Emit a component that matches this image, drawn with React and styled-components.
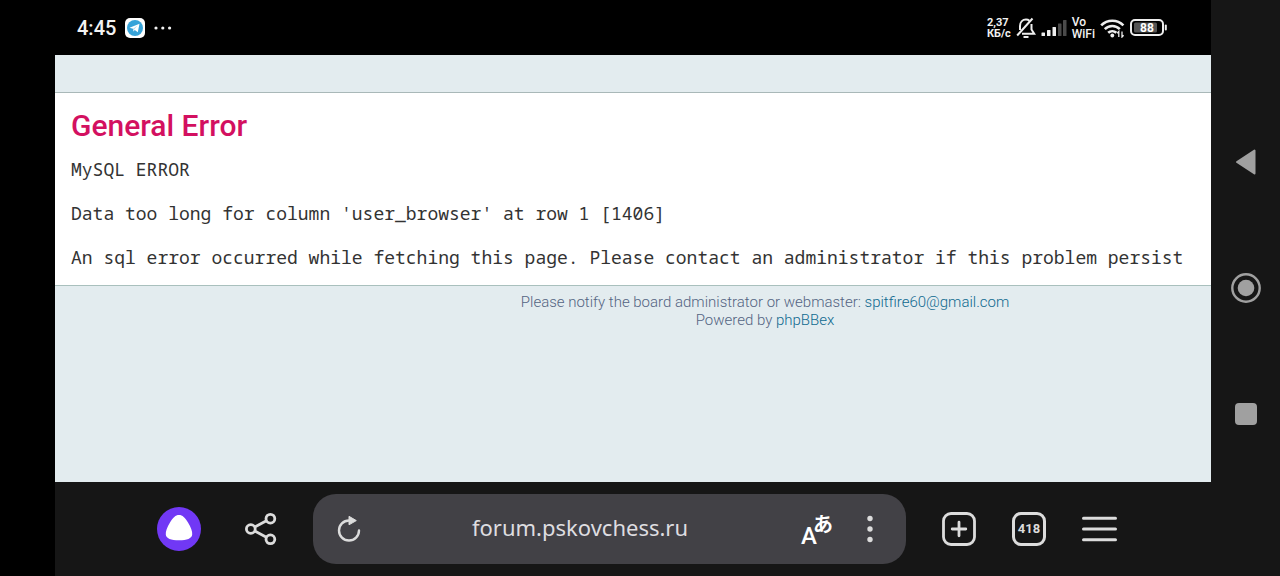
import React from 'react';
import styled, { createGlobalStyle } from 'styled-components';

const GlobalStyle = createGlobalStyle`
  *, *::before, *::after { box-sizing: border-box; }
  body {
    margin: 0;
    background: #000;
    font-family: Roboto, "Liberation Sans", sans-serif;
  }
  svg { display: block; flex: none; }
`;

const Screen = styled.div`
  display: grid;
  grid-template-columns: 55px minmax(0, 1fr) 69px;
  grid-template-rows: 55px 1fr 94px;
  min-height: 100vh;
  background: #000;
`;

const StatusBar = styled.header`
  grid-column: 1 / 3;
  display: flex;
  align-items: center;
  justify-content: space-between;
  padding: 0 44px 0 77px;
  color: #f2f2f2;
`;

const StatusGroup = styled.div`
  display: flex;
  align-items: center;
  gap: ${(p) => p.$gap}px;
`;

const Clock = styled.time`
  font-size: 20px;
  line-height: 24px;
  font-weight: 500;
`;

const TinyLabel = styled.span`
  font-size: ${(p) => p.$size}px;
  line-height: ${(p) => p.$size}px;
  font-weight: ${(p) => p.$weight};
  white-space: nowrap;
`;

const WebView = styled.main`
  grid-column: 2;
  overflow: hidden;
  background: #e3ecef;
`;

/* The forum page is wider than the viewport and runs off its right edge. */
const ForumPage = styled.div`
  width: calc(100% + 264px);
  padding-top: 37px;
`;

const ErrorPanel = styled.section`
  padding: 15px 16px 17px;
  border-top: 1px solid #a9b8b8;
  border-bottom: 1px solid #a9c0bd;
  background: #fff;
`;

const ErrorTitle = styled.h1`
  margin: 0 0 14px;
  font-size: 30px;
  line-height: 36px;
  font-weight: 500;
  color: #d31060;
`;

const ErrorLine = styled.p`
  margin: 0;
  font-family: "Noto Sans Mono", "DejaVu Sans Mono", monospace;
  font-size: 18px;
  line-height: 22px;
  color: #333;
  white-space: nowrap;

  & + & { margin-top: 22px; }
`;

const ForumFooter = styled.footer`
  padding-top: 7px;
  font-size: 15px;
  line-height: 18px;
  font-weight: 300;
  text-align: center;
  color: #536482;
`;

const FooterLink = styled.a`
  color: #0f6a8f;
  text-decoration: none;
`;

const SideNav = styled.nav`
  grid-column: 3;
  grid-row: 1 / 4;
  display: flex;
  flex-direction: column;
  align-items: center;
  justify-content: center;
  gap: 86px;
  background: #161616;
`;

const Toolbar = styled.div`
  grid-column: 2;
  display: flex;
  align-items: center;
  gap: 36px;
  padding: 0 94px 0 102px;
  background: #161616;
`;

const ToolGroup = styled.div`
  display: flex;
  align-items: center;
  gap: ${(p) => p.$gap}px;
`;

const IconButton = styled.button`
  display: flex;
  align-items: center;
  justify-content: center;
  flex: none;
  width: ${(p) => p.$width}px;
  height: 40px;
  padding: 0;
  border: 0;
  background: none;
  color: #dcdcdc;
`;

const AddressBar = styled.div`
  display: flex;
  flex: 1;
  align-items: center;
  min-width: 0;
  height: 70px;
  padding: 0 24px;
  border-radius: 23px;
  background: #424146;
`;

const AddressInput = styled.input`
  flex: 1;
  min-width: 0;
  padding: 0 0 4px;
  border: 0;
  outline: 0;
  background: none;
  font-family: "Noto Sans", sans-serif;
  font-size: 22px;
  line-height: 30px;
  text-align: center;
  color: #dedde0;
`;

const MoreButton = styled(IconButton)`
  margin-left: 23px;
`;

const TabsButton = styled.button`
  flex: none;
  width: 34px;
  height: 34px;
  padding: 0;
  border: 3px solid #dcdcdc;
  border-radius: 9px;
  background: none;
  font-family: Roboto, sans-serif;
  font-size: 13px;
  line-height: 28px;
  font-weight: 700;
  text-align: center;
  color: #dcdcdc;
`;

const TelegramIcon = () => (
  <svg width="20" height="20" viewBox="0 0 20 20">
    <rect width="20" height="20" rx="5" fill="#fff" />
    <circle cx="10" cy="10" r="8" fill="#36a3d9" />
    <path d="M4.5 9.8 14.5 5.8 12.8 14.2 9.8 12 8.4 13.4 8 10.8Z" fill="#fff" />
    <path d="m8 10.8 4.6-3.2-3.4 3.9-.8 1.9Z" fill="#b5dcf0" />
  </svg>
);

const DotsIcon = () => (
  <svg width="18" height="4" viewBox="0 0 18 4" fill="#f2f2f2">
    <circle cx="2" cy="2" r="1.6" />
    <circle cx="8.8" cy="2" r="1.6" />
    <circle cx="15.6" cy="2" r="1.6" />
  </svg>
);

const MutedBellIcon = () => (
  <svg width="20" height="22" viewBox="0 0 20 22" fill="none" stroke="#eee" strokeWidth="2">
    <path d="M4 13V9C4 5.200 6.500 2.500 10 2.500c1.300 0 2.500.4 3.500 1.200M15.500 7V12.500L18.200 16.800H6" />
    <path d="M1.200 18.500 16.500 1.500" />
    <path d="M7.500 20h5" />
  </svg>
);

const SignalIcon = () => (
  <svg width="26" height="18" viewBox="0 0 26 18">
    <rect x="0.500" y="13.500" width="3.500" height="3.500" rx="0.500" fill="#eee" />
    <rect x="6" y="11" width="3.500" height="6" rx="0.500" fill="#eee" />
    <rect x="11.500" y="8" width="3.500" height="9" rx="0.500" fill="#eee" />
    <rect x="17" y="4.500" width="3.500" height="12.500" rx="0.500" fill="#4a4a4a" />
    <rect x="22" y="1" width="3.500" height="16" rx="0.500" fill="#4a4a4a" />
  </svg>
);

const WifiIcon = () => (
  <svg width="25" height="20" viewBox="0 0 25 20" fill="none" stroke="#eee" strokeWidth="2.600">
    <path d="M1.200 7.400a15.500 15.500 0 0 1 22.200 0" />
    <path d="M4.800 11.200a10.500 10.500 0 0 1 15 0" />
    <path d="M8.200 14.800a6 6 0 0 1 8.200 0" />
    <circle cx="12.300" cy="17.500" r="1.900" fill="#eee" stroke="none" />
    <path d="M18.800 19v-5.500l-1.600 1.800M22 13.500V19l1.600-1.800" strokeWidth="1.300" />
  </svg>
);

const BatteryIcon = () => (
  <svg width="37" height="17" viewBox="0 0 37 17">
    <rect x="1" y="1" width="32" height="15" rx="4" fill="none" stroke="#eee" strokeWidth="2" />
    <rect x="4" y="3.500" width="23" height="10" rx="1.500" fill="#555" />
    <rect x="34.800" y="5.500" width="2" height="6" rx="1" fill="#eee" />
    <text x="17" y="12.500" textAnchor="middle" fontFamily="Roboto, sans-serif" fontSize="12" fontWeight="700" fill="#fff">88</text>
  </svg>
);

const AliceIcon = () => (
  <svg width="44" height="44" viewBox="0 0 44 44">
    <circle cx="22" cy="22" r="22" fill="#7138f5" />
    <path d="M22 8C25.500 8 28 10.500 31 15.500C34 20.500 35.500 24.500 35.200 27.500C34.900 31.500 30 33.300 22 33.300S9.100 31.500 8.800 27.500C8.500 24.500 10 20.500 13 15.500C16 10.500 18.500 8 22 8Z" fill="#fff" />
  </svg>
);

const ShareIcon = () => (
  <svg width="32" height="34" viewBox="0 0 32 34" fill="none" stroke="#dcdcdc" strokeWidth="2.800">
    <circle cx="5.800" cy="17" r="4.400" />
    <circle cx="25.400" cy="6.700" r="4.400" />
    <circle cx="25.400" cy="27.300" r="4.400" />
    <path d="M9.800 14.900 21.400 8.800M9.800 19.100 21.400 25.200" />
  </svg>
);

const ReloadIcon = () => (
  <svg width="24" height="28" viewBox="0 0 24 28">
    <path d="M22 15.500a10 10 0 1 1-10-10" fill="none" stroke="#dcdcdc" strokeWidth="2.400" strokeLinecap="round" />
    <path d="M12 1.300 19.300 5.600 12 9.800Z" fill="#dcdcdc" stroke="#dcdcdc" strokeLinejoin="round" />
  </svg>
);

const TranslateIcon = () => (
  <svg width="34" height="32" viewBox="0 0 34 32" fill="#fff" overflow="visible">
    <text x="1" y="31" fontFamily="Roboto, sans-serif" fontSize="24" fontWeight="500">A</text>
    <text x="13" y="19" fontFamily="'Noto Sans CJK JP', sans-serif" fontSize="20" fontWeight="700">あ</text>
  </svg>
);

const MoreIcon = () => (
  <svg width="6" height="28" viewBox="0 0 6 28" fill="#dcdcdc">
    <circle cx="3" cy="3.500" r="2.700" />
    <circle cx="3" cy="14" r="2.700" />
    <circle cx="3" cy="24.500" r="2.700" />
  </svg>
);

const NewTabIcon = () => (
  <svg width="34" height="34" viewBox="0 0 34 34" fill="none" stroke="#dcdcdc" strokeWidth="2.800">
    <rect x="1.500" y="1.500" width="31" height="31" rx="7.500" />
    <path d="M17 10.200v13.600M10.200 17h13.600" strokeLinecap="round" />
  </svg>
);

const MenuIcon = () => (
  <svg width="35" height="26" viewBox="0 0 35 26" stroke="#dcdcdc" strokeWidth="3" strokeLinecap="round">
    <path d="M1.500 2.200h32M1.500 13h32M1.500 23.800h32" />
  </svg>
);

const BackIcon = () => (
  <svg width="22" height="28" viewBox="0 0 22 28">
    <path d="M19.500 2.500V25.500L2 14Z" fill="#a0a0a0" stroke="#a0a0a0" strokeWidth="2" strokeLinejoin="round" />
  </svg>
);

const HomeIcon = () => (
  <svg width="30" height="30" viewBox="0 0 30 30">
    <circle cx="15" cy="15" r="13.700" fill="none" stroke="#a0a0a0" strokeWidth="2.400" />
    <circle cx="15" cy="15" r="8.300" fill="#a0a0a0" />
  </svg>
);

const RecentsIcon = () => (
  <svg width="22" height="22" viewBox="0 0 22 22">
    <rect width="22" height="22" rx="4" fill="#a0a0a0" />
  </svg>
);

const errorLines = [
  'MySQL ERROR',
  "Data too long for column 'user_browser' at row 1 [1406]",
  'An sql error occurred while fetching this page. Please contact an administrator if this problem persist',
];

export default function App() {
  return (
    <>
      <GlobalStyle />
      <Screen>
        <StatusBar>
          <StatusGroup $gap={9}>
            <Clock>4:45</Clock>
            <TelegramIcon />
            <DotsIcon />
          </StatusGroup>
          <StatusGroup $gap={5}>
            <TinyLabel $size={11} $weight={700}>2,37<br />КБ/с</TinyLabel>
            <MutedBellIcon />
            <SignalIcon />
            <TinyLabel $size={12} $weight={500}>Vo<br />WiFi</TinyLabel>
            <WifiIcon />
            <BatteryIcon />
          </StatusGroup>
        </StatusBar>

        <WebView>
          <ForumPage>
            <ErrorPanel>
              <ErrorTitle>General Error</ErrorTitle>
              {errorLines.map((line) => (
                <ErrorLine key={line}>{line}</ErrorLine>
              ))}
            </ErrorPanel>
            <ForumFooter>
              Please notify the board administrator or webmaster:{' '}
              <FooterLink href="mailto:spitfire60@gmail.com">spitfire60@gmail.com</FooterLink>
              <br />
              Powered by <FooterLink href="#phpbbex">phpBBex</FooterLink>
            </ForumFooter>
          </ForumPage>
        </WebView>

        <Toolbar>
          <ToolGroup $gap={44}>
            <IconButton $width={44} aria-label="Assistant"><AliceIcon /></IconButton>
            <IconButton $width={32} aria-label="Share"><ShareIcon /></IconButton>
          </ToolGroup>
          <AddressBar>
            <IconButton $width={24} aria-label="Reload"><ReloadIcon /></IconButton>
            <AddressInput type="text" aria-label="Address" defaultValue="forum.pskovchess.ru" />
            <IconButton $width={36} aria-label="Translate"><TranslateIcon /></IconButton>
            <MoreButton $width={24} aria-label="More"><MoreIcon /></MoreButton>
          </AddressBar>
          <ToolGroup $gap={36}>
            <IconButton $width={34} aria-label="New tab"><NewTabIcon /></IconButton>
            <TabsButton aria-label="418 open tabs">418</TabsButton>
            <IconButton $width={35} aria-label="Menu"><MenuIcon /></IconButton>
          </ToolGroup>
        </Toolbar>

        <SideNav aria-label="System">
          <IconButton $width={40} aria-label="Back"><BackIcon /></IconButton>
          <IconButton $width={40} aria-label="Home"><HomeIcon /></IconButton>
          <IconButton $width={40} aria-label="Recent apps"><RecentsIcon /></IconButton>
        </SideNav>
      </Screen>
    </>
  );
}
